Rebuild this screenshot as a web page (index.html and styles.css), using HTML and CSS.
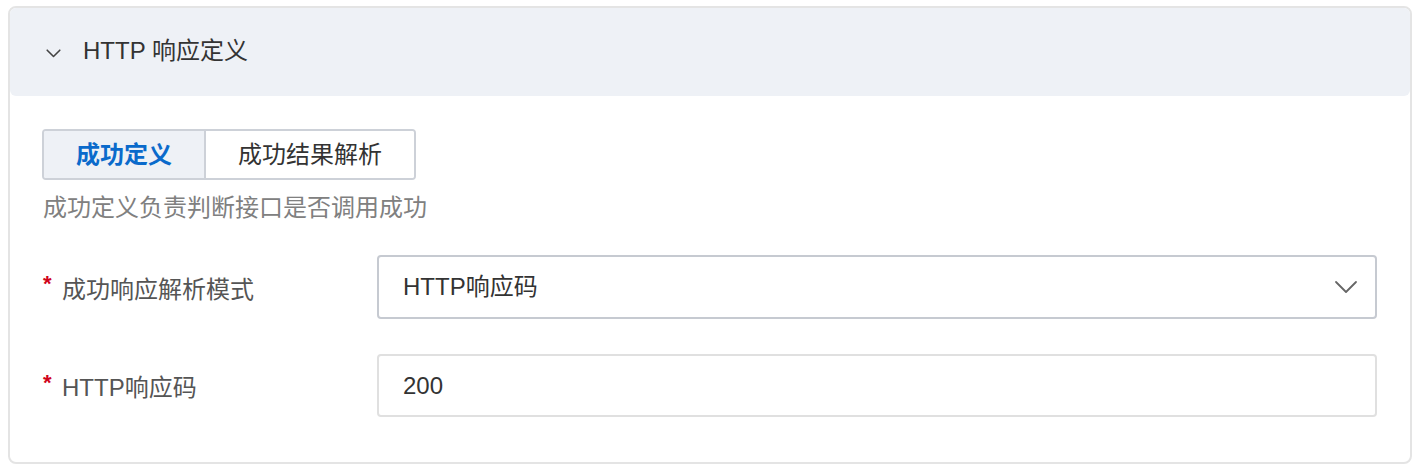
FILE: index.html
```html
<!DOCTYPE html>
<html lang="zh">
<head>
<meta charset="utf-8">
<title>HTTP 响应定义</title>
<link rel="stylesheet" href="styles.css">
</head>
<body>
<section class="card">
  <header class="card-header">
    <svg class="caret" width="15" height="9" viewBox="0 0 15 9"><path d="M1.2 1.2 L7.5 7.5 L13.8 1.2" fill="none" stroke="#444" stroke-width="1.6" stroke-linecap="round" stroke-linejoin="round"/></svg>
    <span class="title">HTTP 响应定义</span>
  </header>
  <div class="card-body">
    <div class="seg">
      <button class="seg-btn active">成功定义</button>
      <button class="seg-btn">成功结果解析</button>
    </div>
    <p class="desc">成功定义负责判断接口是否调用成功</p>
    <div class="form">
      <div class="row">
        <label class="label"><span class="req">*</span>成功响应解析模式</label>
        <div class="control select">
          <span class="value">HTTP响应码</span>
          <svg class="arrow" width="24" height="14" viewBox="0 0 24 14"><path d="M2 2 L12 12 L22 2" fill="none" stroke="#666" stroke-width="1.8" stroke-linecap="round" stroke-linejoin="round"/></svg>
        </div>
      </div>
      <div class="row">
        <label class="label"><span class="req">*</span>HTTP响应码</label>
        <div class="control input">
          <span class="value">200</span>
        </div>
      </div>
    </div>
  </div>
</section>
</body>
</html>
```

FILE: styles.css
```css
* { box-sizing: border-box; }
html, body { margin: 0; padding: 0; background: #fff; }
body {
  font-family: "Liberation Sans", "Noto Sans CJK SC", sans-serif;
  font-size: 24px;
  color: #333;
  padding: 6px 12px 8px 8px;
}
.card {
  border: 2px solid #e4e4e4;
  border-radius: 8px;
  height: 458px;
}
.card-header {
  background: #eef1f6;
  border-radius: 6px;
  height: 88px;
  display: flex;
  align-items: center;
  padding-left: 36px;
  gap: 22px;
}
.caret { display: block; position: relative; top: 1px; }
.title { color: #333; font-size: 24px; line-height: 1; position: relative; top: -1px; }
.card-body {
  padding: 33px 33px 0 32px;
}
.seg {
  display: inline-flex;
  border: 2px solid #cdd1d8;
  border-radius: 4px;
  height: 51px;
  overflow: hidden;
}
.seg-btn {
  font-family: inherit;
  font-size: 24px;
  color: #333;
  background: #fff;
  border: none;
  padding: 0 32px;
  margin: 0;
  height: 100%;
  line-height: 1;
}
.seg-btn.active {
  background: #eef1f6;
  color: #0a6acb;
  font-weight: bold;
  border-right: 2px solid #cdd1d8;
}
.desc {
  margin: 8px 0 0 1px;
  color: #808080;
  line-height: 40px;
}
.form {
  margin-top: 27px;
  display: flex;
  flex-direction: column;
  gap: 35px;
}
.row {
  display: flex;
  align-items: center;
}
.label {
  width: 335px;
  flex: none;
  color: #555;
  display: flex;
  align-items: center;
  padding-left: 1px;
}
.req {
  color: #d0021b;
  font-weight: bold;
  font-size: 22px;
  width: 19px;
  position: relative;
  top: -3px;
}
.control {
  flex: 1;
  display: flex;
  align-items: center;
  justify-content: space-between;
  padding: 0 17px 0 24px;
  border-radius: 4px;
  background: #fff;
}
.select {
  height: 64px;
  border: 2px solid #c6cad1;
}
.input {
  height: 63px;
  border: 2px solid #e0e0e0;
}
.value { color: #333; line-height: 1; }
.arrow { display: block; }
```
